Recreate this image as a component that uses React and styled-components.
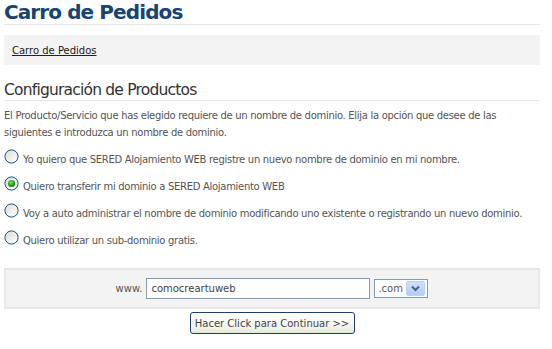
import { useState } from 'react';
import styled, { createGlobalStyle } from 'styled-components';

const GlobalStyle = createGlobalStyle`
  body {
    margin: 0;
    background: #fff;
    font-family: "DejaVu Sans", Verdana, sans-serif;
    color: #555;
  }
`;

const options = [
  'Yo quiero que SERED Alojamiento WEB registre un nuevo nombre de dominio en mi nombre.',
  'Quiero transferir mi dominio a SERED Alojamiento WEB',
  'Voy a auto administrar el nombre de dominio modificando uno existente o registrando un nuevo dominio.',
  'Quiero utilizar un sub-dominio gratis.',
];

const Radio = ({ checked }) => (
  <svg width="15" height="15" viewBox="0 0 15 15">
    <defs>
      <linearGradient id="rbg" x1="0" y1="0" x2="1" y2="1">
        <stop offset="0" stopColor="#dcdcd6" />
        <stop offset="1" stopColor="#ffffff" />
      </linearGradient>
      <radialGradient id="rdot" cx="0.4" cy="0.35" r="0.7">
        <stop offset="0" stopColor="#7be36a" />
        <stop offset="0.6" stopColor="#21a31b" />
        <stop offset="1" stopColor="#137a10" />
      </radialGradient>
    </defs>
    <circle cx="7.5" cy="7.5" r="6.6" fill="url(#rbg)" stroke="#1c5180" strokeWidth="1" />
    {checked && <circle cx="7.5" cy="7.5" r="3.6" fill="url(#rdot)" />}
  </svg>
);

const App = () => {
  const [choice, setChoice] = useState(1);

  return (
    <Page>
      <GlobalStyle />
      <Title>Carro de Pedidos</Title>
      <Breadcrumb>
        <a href="#">Carro de Pedidos</a>
      </Breadcrumb>

      <SubTitle>Configuración de Productos</SubTitle>
      <Intro>
        El Producto/Servicio que has elegido requiere de un nombre de dominio. Elija la opción que desee de las
        siguientes e introduzca un nombre de dominio.
      </Intro>

      <Options>
        {options.map((text, i) => (
          <Option key={i} onClick={() => setChoice(i)}>
            <Radio checked={choice === i} />
            <span>{text}</span>
          </Option>
        ))}
      </Options>

      <DomainBox>
        <Www>www.</Www>
        <DomainInput defaultValue="comocreartuweb" />
        <Tld>
          <span>.com</span>
          <TldArrow>
            <svg width="9" height="7" viewBox="0 0 9 7">
              <path d="M1 1.5 L4.5 5 L8 1.5" fill="none" stroke="#4d6185" strokeWidth="2" />
            </svg>
          </TldArrow>
        </Tld>
      </DomainBox>

      <Actions>
        <ContinueButton type="button">Hacer Click para Continuar &gt;&gt;</ContinueButton>
      </Actions>
    </Page>
  );
};

const Page = styled.div`
  width: 536px;
  padding: 0 0 0 4px;
`;

const Title = styled.h1`
  margin: 0;
  padding: 1px 0;
  font-size: 20px;
  line-height: 22px;
  font-weight: bold;
  letter-spacing: -0.9px;
  color: #17456f;
  border-bottom: 1px solid #e6e6e6;
`;

const Breadcrumb = styled.div`
  margin-top: 10px;
  height: 30px;
  padding: 0 8px;
  display: flex;
  align-items: center;
  background: #f3f3f3;
  font-size: 10px;

  a {
    color: #222;
    text-decoration: underline;
  }
`;

const SubTitle = styled.h2`
  margin: 15px 0 0;
  font-size: 15.5px;
  font-weight: normal;
  line-height: 20px;
  letter-spacing: -0.8px;
  color: #333;
  border-bottom: 1px solid #e6e6e6;
`;

const Intro = styled.p`
  margin: 6px 0 0;
  font-size: 10px;
  line-height: 17px;
  letter-spacing: -0.3px;
  color: #555;
`;

const Options = styled.div`
  margin-top: 2px;
  display: flex;
  flex-direction: column;
`;

const Option = styled.label`
  display: flex;
  align-items: center;
  gap: 4px;
  height: 27px;
  font-size: 10px;
  letter-spacing: -0.3px;
  color: #555;
  cursor: pointer;

  span {
    padding-top: 5px;
    white-space: nowrap;
  }
`;

const DomainBox = styled.div`
  margin-top: 17px;
  height: 37px;
  display: flex;
  align-items: center;
  justify-content: center;
  gap: 4px;
  background: #f3f3f3;
  border: 2px solid #e8e8e8;
`;

const Www = styled.span`
  font-size: 10px;
  color: #555;
`;

const DomainInput = styled.input`
  width: 224px;
  height: 21px;
  box-sizing: border-box;
  padding: 0 4px;
  border: 1px solid #7f9db9;
  font-family: inherit;
  font-size: 10px;
  color: #444;
  outline: none;
`;

const Tld = styled.div`
  width: 54px;
  height: 19px;
  display: flex;
  align-items: center;
  justify-content: space-between;
  padding: 1px 2px 1px 3px;
  box-sizing: border-box;
  background: #fff;
  border: 1px solid #7f9db9;
  font-size: 10px;
  color: #555;
`;

const TldArrow = styled.span`
  width: 19px;
  height: 15px;
  display: flex;
  align-items: center;
  justify-content: center;
  border-radius: 2px;
  background: linear-gradient(#d0dfff, #b3ccfb);
  border: 1px solid #bccff7;
  box-sizing: border-box;
`;

const Actions = styled.div`
  margin-top: 3px;
  display: flex;
  justify-content: center;
`;

const ContinueButton = styled.button`
  width: 165px;
  height: 22px;
  padding: 0;
  border: 1px solid #1c3f6e;
  border-radius: 3px;
  background: linear-gradient(#ffffff, #f4f4ee 70%, #e6e5dc);
  font-family: inherit;
  font-size: 10px;
  color: #444;
  cursor: pointer;
`;

export default App;
